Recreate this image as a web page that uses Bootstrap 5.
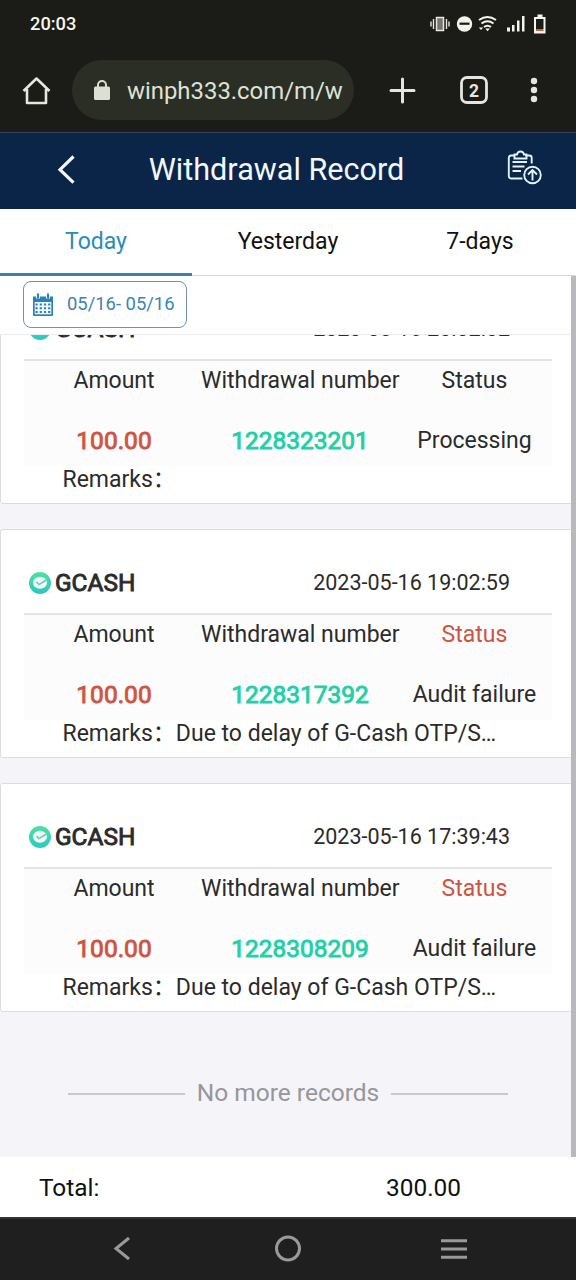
<!DOCTYPE html>
<html lang="en">
<head>
<meta charset="utf-8">
<meta name="viewport" content="width=device-width, initial-scale=1">
<title>Withdrawal Record</title>
<link href="https://cdn.jsdelivr.net/npm/bootstrap@5.3.0/dist/css/bootstrap.min.css" rel="stylesheet">
<style>
body{font-family:Roboto,"Noto Sans CJK SC",sans-serif;font-size:23px;line-height:1.2;color:#2b2b2b;background:#f4f4f9;height:1280px;overflow:hidden}
svg{display:block;flex:none}
.statusbar{height:48px;background:#1b1b17;color:#f6f6f0;font-size:18.3px;font-weight:500;padding:0 29px 0 30px}
.browserbar{height:85px;background:#1b1b17;padding:12px 0 13px 22px;border-bottom:1px solid #34435a}
.urlpill{width:282px;height:60px;border-radius:30px;margin-left:21px;padding-left:21px;background:#2a2e25;color:#dfe2d5;font-size:23.900px}
.urlpill span{padding-top:3px}
.apphead{height:76px;background:#0a2547;color:#f2f8ff;font-size:30.600px}
.apphead .title{flex:1;text-align:center;padding:0 25px 1px 0}
.daytabs{height:67px;background:#fff;border-bottom:1px solid #d9dadd;color:#111}
.daytabs .tab{flex:1;text-align:center;height:67px;line-height:65px;font-size:23px}
.daytabs .on{color:#2b8bbb;border-bottom:3px solid #3a7fb0}
.filterbar{height:59px;background:#fff;padding:5px 23px;border-bottom:1px solid #ececef}
.range{width:164px;height:47px;border:1px solid #6f93a8;border-radius:8px;color:#3a86ae;font-size:18.4px;padding-left:8px}
.records{height:822px;overflow:hidden;position:relative}
.stack{margin-top:-60px}
.record{height:229px;background:#fff;border:1px solid #dcdce0;border-radius:3px;margin-bottom:25px;padding:0 23px}
.rec-head{height:83px;padding:22px 42px 0 5px}
.bank{font-size:24.400px;-webkit-text-stroke:.9px #2b2b2b}
.stamp{font-size:21.500px}
.rec-body{border-top:2px solid #e4e4e6;background:#fcfcfd;height:107px}
.c1{width:180px}.c2{width:192px}.c3{width:157px}
.rec-body .line1{height:40px}.rec-body .line2{height:66px;padding-top:13px}
.line1 .c2{margin:0 6px 0 -6px;padding-left:3px}
.money{color:#d0553f;-webkit-text-stroke:.9px #d0553f;font-size:24.500px}
.num{color:#23cfa8;-webkit-text-stroke:.9px #23cfa8;font-size:24.500px}
.bad{color:#cf5440}
.remark{padding-left:38.500px;height:28px}
.scrollthumb{position:absolute;right:0;top:0;width:5px;height:822px;background:#b9b9bd}
.endnote{color:#97979b;height:86px;margin-top:13px;font-size:24.500px}
.endnote span{margin:-3px 12px 0}
.rule{width:117px;height:2px;background:#c8c8cd}
.total{height:60px;background:#fff;color:#111;font-size:24.400px;padding:2px 115px 0 39px}
.sysnav{height:63px;background:#1f1f1f;border-top:2px solid #343434}
.topthumb{position:absolute;right:0;top:0;width:5px;height:59px;background:#b9b9bd}
</style>
</head>
<body class="d-flex flex-column">
<svg width="0" height="0" class="position-absolute"><defs>
<linearGradient id="g" x1="0" y1="0" x2="0" y2="1"><stop offset="0" stop-color="#4fe0a4"/><stop offset="1" stop-color="#2cc9bd"/></linearGradient>
<symbol id="coin" viewBox="0 0 22 22"><circle cx="11" cy="11" r="11" fill="url(#g)"/><ellipse cx="11" cy="10.8" rx="7" ry="6" fill="#effcf8"/><path d="M7.500 10l2.500 2.600L17 8.300" fill="none" stroke="#6fc9b4" stroke-width="1.600"/></symbol>
</defs></svg>
<div class="statusbar d-flex align-items-center justify-content-between flex-shrink-0">
  <span>20:03</span>
  <svg width="118" height="22" viewBox="429 13 118 22" fill="#f5f5ee">
    <rect x="436.500" y="17.500" width="7" height="13" fill="#77776f" stroke="#e8e8e0" stroke-width="1.500"/>
    <path d="M433.500 19v10M431 21.500v5M446.500 19v10M449 21.500v5" stroke="#e8e8e0" stroke-width="1.400"/>
    <circle cx="464.500" cy="24" r="7.700"/><path d="M459.500 23.700h10" stroke="#1b1b17" stroke-width="2.200"/>
    <path d="M479 20q8.500-6 17 0M481.500 23.500q6-4.500 12 0M484 27q3.500-2.600 7 0" fill="none" stroke="#f5f5ee" stroke-width="2"/><path d="M485.300 28.500h4.600l-2.300 2.700zM478.800 27.500h4.400l-2.200 2.500z"/>
    <path d="M507 27.500h3v4h-3zM512 25h2.500v6.500H512zM517 20.500h2.500v11H517zM522 16h2.500v15.500H522z"/>
    <path d="M537.500 14.500h5v2.500h3v16.500h-11.500v-16.500h3.500z"/><path d="M536 19h7.500v10H536z" fill="#1b1b17"/><path d="M536 29h7.500v2H536z" fill="#c9683f"/>
  </svg>
</div>
<div class="browserbar d-flex align-items-center flex-shrink-0">
  <svg width="29" height="30" viewBox="0 0 29 30" fill="none" stroke="#e6e6df" stroke-width="2.600" stroke-linejoin="round"><path d="M1.500 16L14.500 3.500 27.500 16M5 14v14h19V14"/></svg>
  <div class="urlpill d-flex align-items-center">
    <svg width="18" height="22" viewBox="0 0 18 22"><rect x="1" y="7.500" width="16" height="13.500" rx="1.500" fill="#dcdfd3"/><path d="M5 8.500V6a4 4 0 018 0v2.500" fill="none" stroke="#dcdfd3" stroke-width="2"/></svg>
    <span class="ms-3">winph333.com/m/w</span>
  </div>
  <svg width="196" height="30" viewBox="366 75 196 30" style="margin-left:12px" fill="none" stroke="#e6e6df" stroke-width="3">
    <path d="M402.500 79v23M391 90.500h23" stroke-linecap="round"/>
    <rect x="461.500" y="77.500" width="25" height="25" rx="5.500" stroke-width="2.800"/>
    <text x="474" y="96.500" text-anchor="middle" font-size="17.500" font-weight="700" fill="#e6e6df" stroke="none">2</text>
    <g fill="#e6e6df" stroke="none"><circle cx="534" cy="81" r="3.200"/><circle cx="534" cy="90" r="3.200"/><circle cx="534" cy="99" r="3.200"/></g>
  </svg>
</div>
<div class="apphead d-flex align-items-center flex-shrink-0">
  <svg width="70" height="36" viewBox="39 153 70 36" class="me-4" style="margin-left:39px" fill="none" stroke="#f2f8ff" stroke-width="3.200"><path d="M73.500 156.500L60 169.700l13.500 13"/></svg>
  <div class="title text-nowrap">Withdrawal Record</div>
  <svg width="36" height="36" viewBox="507 150 36 36" style="margin:0 33px 6px 62px" fill="none" stroke="#e4f1ff" stroke-width="1.900">
    <path d="M514.500 155.500h-3.500q-2.200 0-2.200 2.500v18q0 2.500 2.200 2.500h11.500M525.500 155.500h4q2.200 0 2.200 2.500v5.500"/>
    <path d="M514.500 158.500v-4h2.500q.5-3 3.500-3t3.500 3h2.500v4zM512.500 162h14.500M512.500 166.500h12M512.500 171h8.500"/>
    <circle cx="532.500" cy="175" r="8.300"/><path d="M532.500 180.500v-10M528 174.500l4.500-4.500 4.500 4.500"/>
  </svg>
</div>
<div class="daytabs d-flex flex-shrink-0"><div class="tab on">Today</div><div class="tab">Yesterday</div><div class="tab">7-days</div></div>
<div class="filterbar flex-shrink-0 position-relative">
  <div class="range d-flex align-items-center">
    <svg width="22" height="24" viewBox="0 0 22 24"><path d="M1 3.500h20V22q0 1-1 1H2q-1 0-1-1z" fill="#2b82b9"/><path d="M2.700 9h16.600v12.300H2.700z" fill="#eff9ff"/><path d="M3.500 11.500h15M3.500 15.200h15M3.500 18.900h15" stroke="#2b82b9" stroke-width="2" stroke-dasharray="2.200 2"/><path d="M6 1v4.500M16 1v4.500" stroke="#fff" stroke-width="4"/><path d="M6 .5v5M16 .5v5" stroke="#2b82b9" stroke-width="2.200"/></svg>
    <span style="margin-left:13px">05/16- 05/16</span>
  </div>
  <div class="topthumb"></div>
</div>
<main class="records flex-shrink-0">
  <div class="stack">
    <section class="record">
      <div class="rec-head d-flex align-items-center justify-content-between"><div class="d-flex align-items-center bank"><svg width="22" height="22" class="me-1"><use href="#coin"/></svg>GCASH</div><span class="stamp">2023-05-16 20:02:02</span></div>
      <div class="rec-body text-center text-nowrap"><div class="d-flex line1 align-items-center"><div class="c1 flex-shrink-0">Amount</div><div class="c2 flex-shrink-0">Withdrawal number</div><div class="c3 flex-shrink-0">Status</div></div><div class="d-flex line2 align-items-center"><div class="c1 money flex-shrink-0">100.00</div><div class="c2 num flex-shrink-0">1228323201</div><div class="c3 flex-shrink-0">Processing</div></div></div>
      <div class="remark">Remarks：</div>
    </section>
    <section class="record">
      <div class="rec-head d-flex align-items-center justify-content-between"><div class="d-flex align-items-center bank"><svg width="22" height="22" class="me-1"><use href="#coin"/></svg>GCASH</div><span class="stamp">2023-05-16 19:02:59</span></div>
      <div class="rec-body text-center text-nowrap"><div class="d-flex line1 align-items-center"><div class="c1 flex-shrink-0">Amount</div><div class="c2 flex-shrink-0">Withdrawal number</div><div class="c3 bad flex-shrink-0">Status</div></div><div class="d-flex line2 align-items-center"><div class="c1 money flex-shrink-0">100.00</div><div class="c2 num flex-shrink-0">1228317392</div><div class="c3 flex-shrink-0">Audit failure</div></div></div>
      <div class="remark">Remarks：Due to delay of G-Cash OTP/S…</div>
    </section>
    <section class="record mb-0">
      <div class="rec-head d-flex align-items-center justify-content-between"><div class="d-flex align-items-center bank"><svg width="22" height="22" class="me-1"><use href="#coin"/></svg>GCASH</div><span class="stamp">2023-05-16 17:39:43</span></div>
      <div class="rec-body text-center text-nowrap"><div class="d-flex line1 align-items-center"><div class="c1 flex-shrink-0">Amount</div><div class="c2 flex-shrink-0">Withdrawal number</div><div class="c3 bad flex-shrink-0">Status</div></div><div class="d-flex line2 align-items-center"><div class="c1 money flex-shrink-0">100.00</div><div class="c2 num flex-shrink-0">1228308209</div><div class="c3 flex-shrink-0">Audit failure</div></div></div>
      <div class="remark">Remarks：Due to delay of G-Cash OTP/S…</div>
    </section>
  </div>
  <div class="endnote d-flex align-items-center justify-content-center" style="padding-top:52px"><div class="rule"></div><span>No more records</span><div class="rule"></div></div>
  <div class="scrollthumb"></div>
</main>
<div class="total d-flex align-items-center justify-content-between flex-shrink-0"><span>Total:</span><span>300.00</span></div>
<div class="sysnav flex-shrink-0">
  <svg width="576" height="61" viewBox="0 1219 576 61" fill="none" stroke="#999" stroke-width="3"><path d="M129 1238l-13 10.500 13 10.500"/><circle cx="288" cy="1248.500" r="11.500"/><path d="M441 1240.700h26M441 1249h26M441 1257.300h26"/></svg>
</div>
<script src="https://cdn.jsdelivr.net/npm/bootstrap@5.3.0/dist/js/bootstrap.bundle.min.js"></script>
</body>
</html>
